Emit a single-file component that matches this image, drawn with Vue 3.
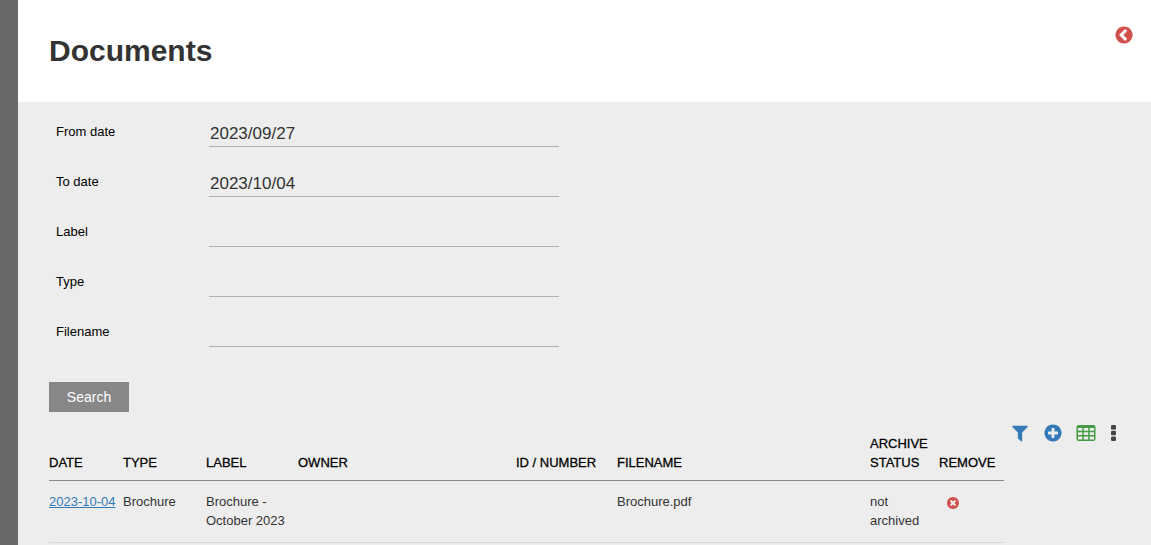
<script setup>
import { ref } from 'vue'

const fields = ref([
  { id: 'from-date', label: 'From date', value: '2023/09/27' },
  { id: 'to-date', label: 'To date', value: '2023/10/04' },
  { id: 'label', label: 'Label', value: '' },
  { id: 'type', label: 'Type', value: '' },
  { id: 'filename', label: 'Filename', value: '' },
])

const columns = [
  { key: 'date', title: 'Date' },
  { key: 'type', title: 'Type' },
  { key: 'label', title: 'Label' },
  { key: 'owner', title: 'Owner' },
  { key: 'number', title: 'ID / Number' },
  { key: 'filename', title: 'Filename' },
  { key: 'archive', title: 'Archive status' },
  { key: 'remove', title: 'Remove' },
]

const documents = ref([
  {
    date: '2023-10-04',
    type: 'Brochure',
    label: 'Brochure - October 2023',
    owner: '',
    number: '',
    filename: 'Brochure.pdf',
    archive: 'not archived',
  },
])

const disc =
  'q0 209-103 385.5t-279.5 279.5-385.5 103-385.5-103-279.5-279.5-103-385.5 103-385.5 279.5-279.5 385.5-103 385.5 103 279.5 279.5 103 385.5z'
const icons = {
  back:
    'M1037 1395l102-102q19-19 19-45t-19-45l-307-307 307-307q19-19 19-45t-19-45l-102-102q-19-19-45-19t-45 19l-454 454q-19 19-19 45t19 45l454 454q19 19 45 19t45-19zm627-499' + disc,
  filter:
    'M1595 295q17 41-14 70l-493 493v742q0 42-39 59-13 5-25 5-27 0-45-19l-256-256q-19-19-19-45v-486l-493-493q-31-29-14-70 17-39 59-39h1280q42 0 59 39z',
  add:
    'M1344 960v-128q0-26-19-45t-45-19h-256v-256q0-26-19-45t-45-19h-128q-26 0-45 19t-19 45v256h-256q-26 0-45 19t-19 45v128q0 26 19 45t45 19h256v256q0 26 19 45t45 19h128q26 0 45-19t19-45v-256h256q26 0 45-19t19-45zm320-64' + disc,
  remove:
    'M1277 1122q0-26-19-45l-181-181 181-181q19-19 19-45 0-27-19-46l-90-90q-19-19-46-19-26 0-45 19l-181 181-181-181q-19-19-45-19-27 0-46 19l-90 90q-19 19-19 46 0 26 19 45l181 181-181 181q-19 19-19 45 0 27 19 46l90 90q19 19 46 19 26 0 45-19l181-181 181 181q19 19 45 19 27 0 46-19l90-90q19-19 19-46zm387-226' + disc,
}
</script>

<template>
  <div class="page">
    <header class="header">
      <h1>Documents</h1>
      <button type="button" class="icon-button red" aria-label="Back">
        <svg class="icon" viewBox="0 0 1792 1792"><path :d="icons.back" /></svg>
      </button>
    </header>

    <main class="content">
      <form class="search" @submit.prevent>
        <div v-for="field in fields" :key="field.id" class="field">
          <label :for="field.id">{{ field.label }}</label>
          <input :id="field.id" v-model="field.value" type="text" autocomplete="off" />
        </div>
        <button type="submit" class="submit">Search</button>
      </form>

      <section class="results">
        <table>
          <colgroup>
            <col v-for="column in columns" :key="column.key" :class="'col-' + column.key" />
          </colgroup>
          <thead>
            <tr>
              <th v-for="column in columns" :key="column.key" scope="col">{{ column.title }}</th>
            </tr>
          </thead>
          <tbody>
            <tr v-for="doc in documents" :key="doc.date">
              <td><a href="#">{{ doc.date }}</a></td>
              <td>{{ doc.type }}</td>
              <td>{{ doc.label }}</td>
              <td>{{ doc.owner }}</td>
              <td>{{ doc.number }}</td>
              <td>{{ doc.filename }}</td>
              <td>{{ doc.archive }}</td>
              <td class="remove-cell">
                <button type="button" class="icon-button red" aria-label="Remove">
                  <svg class="icon small" viewBox="0 0 1792 1792"><path :d="icons.remove" /></svg>
                </button>
              </td>
            </tr>
          </tbody>
        </table>

        <div class="toolbar">
          <button type="button" class="icon-button blue" aria-label="Filter">
            <svg class="icon" viewBox="0 0 1792 1792"><path :d="icons.filter" /></svg>
          </button>
          <button type="button" class="icon-button blue" aria-label="Add">
            <svg class="icon" viewBox="0 0 1792 1792"><path :d="icons.add" /></svg>
          </button>
          <button type="button" class="icon-button green" aria-label="Spreadsheet">
            <svg class="icon" viewBox="0 0 20 20">
              <path
                fill-rule="evenodd"
                d="M2.500 2h15a2 2 0 0 1 2 2v12a2 2 0 0 1-2 2h-15a2 2 0 0 1-2-2V4a2 2 0 0 1 2-2z
                   M2 5v2.800h4.300V5z M7.800 5v2.800h4.400V5z M13.700 5v2.800H18V5z
                   M2 9.200v2.800h4.300V9.200z M7.800 9.200v2.800h4.400V9.200z M13.700 9.200v2.800H18V9.200z
                   M2 13.400v2.600q0 .6.6.6h3.700V13.400z M7.800 13.400v3.200h4.400V13.400z M13.700 13.400v3.200h3.700q.6 0 .6-.6V13.400z"
              />
            </svg>
          </button>
          <button type="button" class="icon-button dark" aria-label="More">
            <svg class="icon dots" viewBox="0 0 8 20">
              <rect x="2" y="2" width="5" height="4.600" rx="1.200" />
              <rect x="2" y="7.700" width="5" height="4.600" rx="1.200" />
              <rect x="2" y="13.400" width="5" height="4.600" rx="1.200" />
            </svg>
          </button>
        </div>
      </section>
    </main>
  </div>
</template>

<style>
body {
  background: #ededed;
}
</style>

<style scoped>
.page {
  box-sizing: border-box;
  min-height: 100vh;
  border-left: 18px solid #696969;
  background: #ededed;
  color: #333;
  font: 13px/19px "Liberation Sans", Arial, sans-serif;
}

.header {
  display: flex;
  justify-content: space-between;
  align-items: flex-start;
  padding: 25px 17px 25px 31px;
  background: #fff;
}

h1 {
  margin: 0;
  font-size: 30px;
  line-height: 52px;
}

.content {
  padding: 19px 0 0 31px;
}

.field {
  display: flex;
  align-items: flex-start;
  height: 50px;
}

.field label {
  width: 153px;
  padding-left: 7px;
  box-sizing: border-box;
  line-height: 21px;
  color: #000;
}

.field input {
  box-sizing: border-box;
  width: 350px;
  height: 26px;
  margin-left: 7px;
  padding: 0 1px;
  border: 0;
  border-bottom: 1px solid #b0b0b0;
  border-radius: 0;
  outline: 0;
  background: transparent;
  color: #333;
  font: 17px/25px "Liberation Sans", Arial, sans-serif;
}

.submit {
  width: 80px;
  height: 30px;
  margin-top: 11px;
  padding: 0;
  border: 0;
  background: #878787;
  color: #fff;
  font: 14px/30px "Liberation Sans", Arial, sans-serif;
}

.results {
  display: flex;
  align-items: flex-start;
  margin-top: 11px;
}

table {
  flex: 1;
  width: 0;
  margin-top: 11px;
  table-layout: fixed;
  border-collapse: collapse;
}

.col-date { width: 74px; }
.col-type { width: 83px; }
.col-label { width: 92px; }
.col-owner { width: 218px; }
.col-number { width: 101px; }
.col-archive { width: 69px; }
.col-remove { width: 65px; }

th {
  padding: 0 0 8px;
  border-bottom: 1px solid #888;
  color: #000;
  font-weight: normal;
  text-align: left;
  text-transform: uppercase;
  vertical-align: bottom;
  -webkit-text-stroke: thin #000;
}

td {
  padding: 11px 0 12px;
  border-bottom: 1px solid #dadada;
  vertical-align: top;
}

a {
  color: #337ab7;
  text-decoration: underline;
}

.icon-button {
  display: block;
  padding: 0;
  border: 0;
  background: none;
}

.icon {
  display: block;
  width: 20px;
  height: 20px;
  fill: currentColor;
}

.icon.small {
  width: 14px;
  height: 14px;
}

.icon.dots {
  width: 8px;
}

td.remove-cell {
  padding: 15px 0 0 7px;
}

.toolbar {
  display: flex;
  gap: 13px;
  box-sizing: border-box;
  width: 147px;
  padding-left: 6px;
}

.red { color: #d0514d; }
.blue { color: #337ab7; }
.green { color: #449d44; }
.dark { color: #444; }
</style>
